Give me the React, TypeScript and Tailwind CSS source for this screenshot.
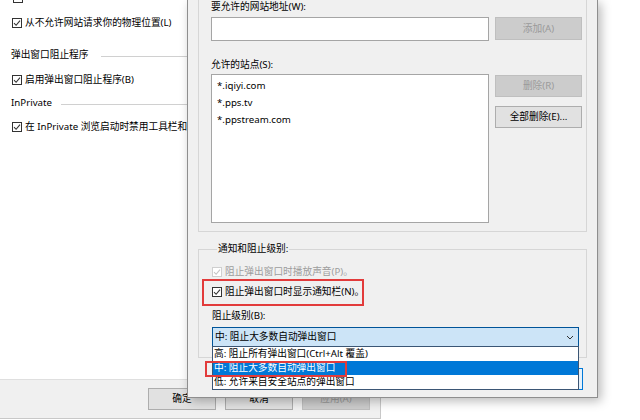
import React from 'react';

function Check({ disabled = false }: { disabled?: boolean }) {
  const c = disabled ? '#c4c4c4' : '#333333';
  return (
    <span
      className={`w-[10px] h-[10px] shrink-0 flex items-center justify-center bg-white border ${
        disabled ? 'border-[#cfcfcf]' : 'border-[#333333]'
      }`}
    >
      <svg width="8" height="8" viewBox="0 0 8 8" fill="none">
        <path d="M1 4.2 L3.1 6.3 L7 1.6" stroke={c} strokeWidth="1.1" />
      </svg>
    </span>
  );
}

function CheckRow({ label, disabled = false }: { label: string; disabled?: boolean }) {
  return (
    <div className="h-[16px] flex items-center gap-[3px] whitespace-nowrap">
      <Check disabled={disabled} />
      <span className={disabled ? 'text-[#9d9d9d]' : 'text-black'}>{label}</span>
    </div>
  );
}

function WinButton({ label, disabled = false, className = '' }: { label: string; disabled?: boolean; className?: string }) {
  return (
    <div
      className={`h-[22px] flex items-center justify-center border ${
        disabled ? 'bg-[#cccccc] border-[#bfbfbf] text-[#9a9a9a]' : 'bg-[#e1e1e1] border-[#adadad] text-black'
      } ${className}`}
    >
      {label}
    </div>
  );
}

export default function App() {
  return (
    <div className="relative w-[640px] h-[420px] bg-white overflow-hidden font-['Noto_Sans','Noto_Sans_CJK_SC',sans-serif] text-[9.7px] leading-[14px] text-black">
      {/* window behind */}
      <div className="w-[381px] h-[419px] flex flex-col border-r border-b border-[#c8c8c8]">
        <div className="flex-1 bg-white flex flex-col">
          <div className="h-[3px] ml-[13px] w-[10px] border-b border-x border-[#333333]" />
          <div className="mt-[10px] ml-[12px] h-[20px] flex items-center">
            <CheckRow label="从不允许网站请求你的物理位置(L)" />
          </div>
          <div className="mt-[12px] h-[20px] pl-[11px] flex items-center">
            <span className="whitespace-nowrap">弹出窗口阻止程序</span>
            <div className="flex-1 ml-[12px] mt-[3px] h-px bg-[#d0d0d0]" />
          </div>
          <div className="mt-[5px] ml-[12px] h-[20px] flex items-center">
            <CheckRow label="启用弹出窗口阻止程序(B)" />
          </div>
          <div className="mt-[3px] h-[20px] pl-[11px] flex items-center">
            <span className="whitespace-nowrap">InPrivate</span>
            <div className="flex-1 ml-[9px] mt-[3px] h-px bg-[#d0d0d0]" />
          </div>
          <div className="mt-[4px] ml-[12px] h-[20px] flex items-center">
            <CheckRow label="在 InPrivate 浏览启动时禁用工具栏和扩展" />
          </div>
        </div>
        <div className="h-[39px] bg-[#f0f0f0] border-t border-[#dfdfdf] flex items-center gap-[9px] pl-[148px]">
          <WinButton label="确定" className="w-[68px]" />
          <WinButton label="取消" className="w-[68px]" />
          <WinButton label="应用(A)" disabled className="w-[68px]" />
        </div>
      </div>

      {/* pop-up blocker settings dialog */}
      <div className="absolute left-[187px] top-0 w-[411px] h-[398px] bg-[#f0f0f0] border-x border-b border-[#8e8e8e] shadow-[3px_3px_10px_rgba(0,0,0,0.28)] px-[10px] flex flex-col">
        {/* exceptions group */}
        <div className="border-x border-b border-[#d6d6d6] pl-[12px] pr-[3px] pb-[8px]">
          <div className="h-[14px] whitespace-nowrap">要允许的网站地址(W):</div>
          <div className="mt-[3px] flex gap-[6px]">
            <div className="w-[278px] h-[24px] bg-white border border-[#a5a5a5]" />
            <WinButton label="添加(A)" disabled className="w-[87px] h-[23px]" />
          </div>
          <div className="mt-[17px] h-[14px] whitespace-nowrap">允许的站点(S):</div>
          <div className="mt-[2px] flex gap-[6px]">
            <div className="w-[278px] h-[149px] bg-white border border-[#a5a5a5] pl-[5px] pt-[2px] flex flex-col">
              <div className="h-[17px] flex items-center">*.iqiyi.com</div>
              <div className="h-[17px] flex items-center">*.pps.tv</div>
              <div className="h-[17px] flex items-center">*.ppstream.com</div>
            </div>
            <div className="flex flex-col gap-[9px] pt-[1px]">
              <WinButton label="删除(R)" disabled className="w-[87px]" />
              <WinButton label="全部删除(E)..." className="w-[87px]" />
            </div>
          </div>
        </div>

        {/* notifications and blocking level */}
        <fieldset className="mt-[10px] border border-[#d6d6d6] pl-[13px] pr-[7px] pb-[10px]">
          <legend className="ml-[5px] px-[1px] h-[14px] whitespace-nowrap">通知和阻止级别:</legend>
          <div className="mt-[8px]">
            <CheckRow label="阻止弹出窗口时播放声音(P)。" disabled />
          </div>
          <div className="mt-[4px]">
            <CheckRow label="阻止弹出窗口时显示通知栏(N)。" />
          </div>
          <div className="mt-[9px] h-[14px] whitespace-nowrap">阻止级别(B):</div>
          <div className="relative mt-[4px] h-[20px] bg-[#cce4f7] border border-[#005499] flex items-center pl-[2px] pr-[4px]">
            <span className="flex-1 whitespace-nowrap">中: 阻止大多数自动弹出窗口</span>
            <svg width="8" height="5" viewBox="0 0 8 5" fill="none">
              <path d="M1 1 L4 4 L7 1" stroke="#333333" strokeWidth="1" />
            </svg>
            <div className="absolute left-[-1px] right-[-1px] top-full z-10 bg-white border border-[#3b5675] flex flex-col">
              <div className="h-[14px] pl-[1px] flex items-center whitespace-nowrap">高: 阻止所有弹出窗口(Ctrl+Alt 覆盖)</div>
              <div className="h-[14px] pl-[1px] flex items-center whitespace-nowrap bg-[#0078d7] text-white">中: 阻止大多数自动弹出窗口</div>
              <div className="h-[14px] pl-[1px] flex items-center whitespace-nowrap">低: 允许来自安全站点的弹出窗口</div>
            </div>
          </div>
        </fieldset>

        <div className="mt-[10px] flex justify-end pr-[4px]">
          <div className="w-[87px] h-[22px] bg-[#e5f1fb] border border-[#0078d7] flex items-center justify-center">关闭(C)</div>
        </div>
      </div>

      {/* red annotations */}
      <div className="absolute left-[202px] top-[279px] w-[162px] h-[27px] border-2 border-[#e23b3b] z-20" />
      <div className="absolute left-[205px] top-[361px] w-[142px] h-[16px] border-2 border-[#e23b3b] z-20" />
    </div>
  );
}
